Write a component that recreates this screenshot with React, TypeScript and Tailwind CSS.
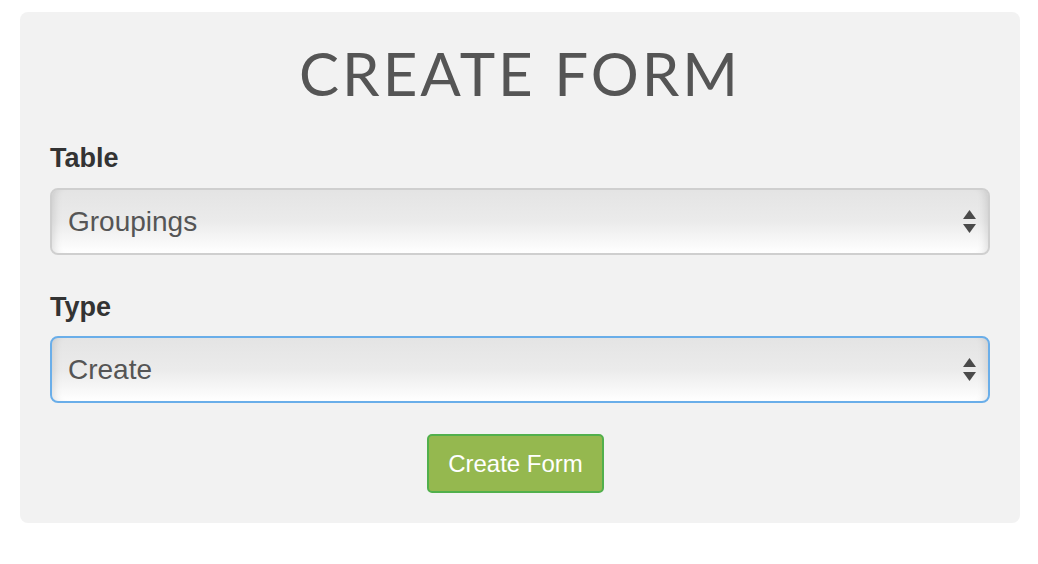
import React from "react";

function Arrows() {
  return (
    <svg width="13" height="24" viewBox="0 0 13 24" className="shrink-0">
      <polygon points="6.5,0 13,9 0,9" fill="#4a4a4a" />
      <polygon points="0,14 13,14 6.5,23" fill="#4a4a4a" />
    </svg>
  );
}

function FakeSelect({ value, focused }: { value: string; focused?: boolean }) {
  return (
    <div
      className={
        "flex h-[67px] items-center justify-between rounded-[8px] border-2 pl-[16px] pr-[12px] bg-gradient-to-b from-[#e4e4e4] via-[#ebebeb] to-[#ffffff] shadow-[inset_10px_0_8px_-8px_rgba(0,0,0,0.12),inset_-10px_0_8px_-8px_rgba(0,0,0,0.12)] " +
        (focused ? "border-[#6aaee9]" : "border-[#cfcfcf]")
      }
    >
      <span className="text-[28px] leading-none text-[#555555] [font-family:'Liberation_Sans',Arial,sans-serif]">
        {value}
      </span>
      <Arrows />
    </div>
  );
}

export default function App() {
  return (
    <div className="min-h-[564px] bg-white pt-[12px] pl-[20px] pr-[18px]">
      <div className="w-[1000px] rounded-[8px] bg-[#f2f2f2] px-[30px] pt-[31px] pb-[30px]">
        <h1 className="text-center text-[60px] leading-none font-normal text-[#555555] tracking-[3px] [font-family:Lato,sans-serif]">
          CREATE FORM
        </h1>
        <div className="mt-[42px] [font-family:'Liberation_Sans',Arial,sans-serif]">
          <div className="mb-[16px] text-[27px] leading-none font-bold text-[#333333]">
            Table
          </div>
          <FakeSelect value="Groupings" />
          <div className="mt-[39px] mb-[15px] text-[27px] leading-none font-bold text-[#333333]">
            Type
          </div>
          <FakeSelect value="Create" focused />
          <div className="mt-[31px] flex justify-center pr-[9px]">
            <button className="h-[59px] w-[177px] rounded-[5px] border-2 border-[#52b04c] bg-[#95b84f] text-[24px] leading-none text-white">
              Create Form
            </button>
          </div>
        </div>
      </div>
    </div>
  );
}
